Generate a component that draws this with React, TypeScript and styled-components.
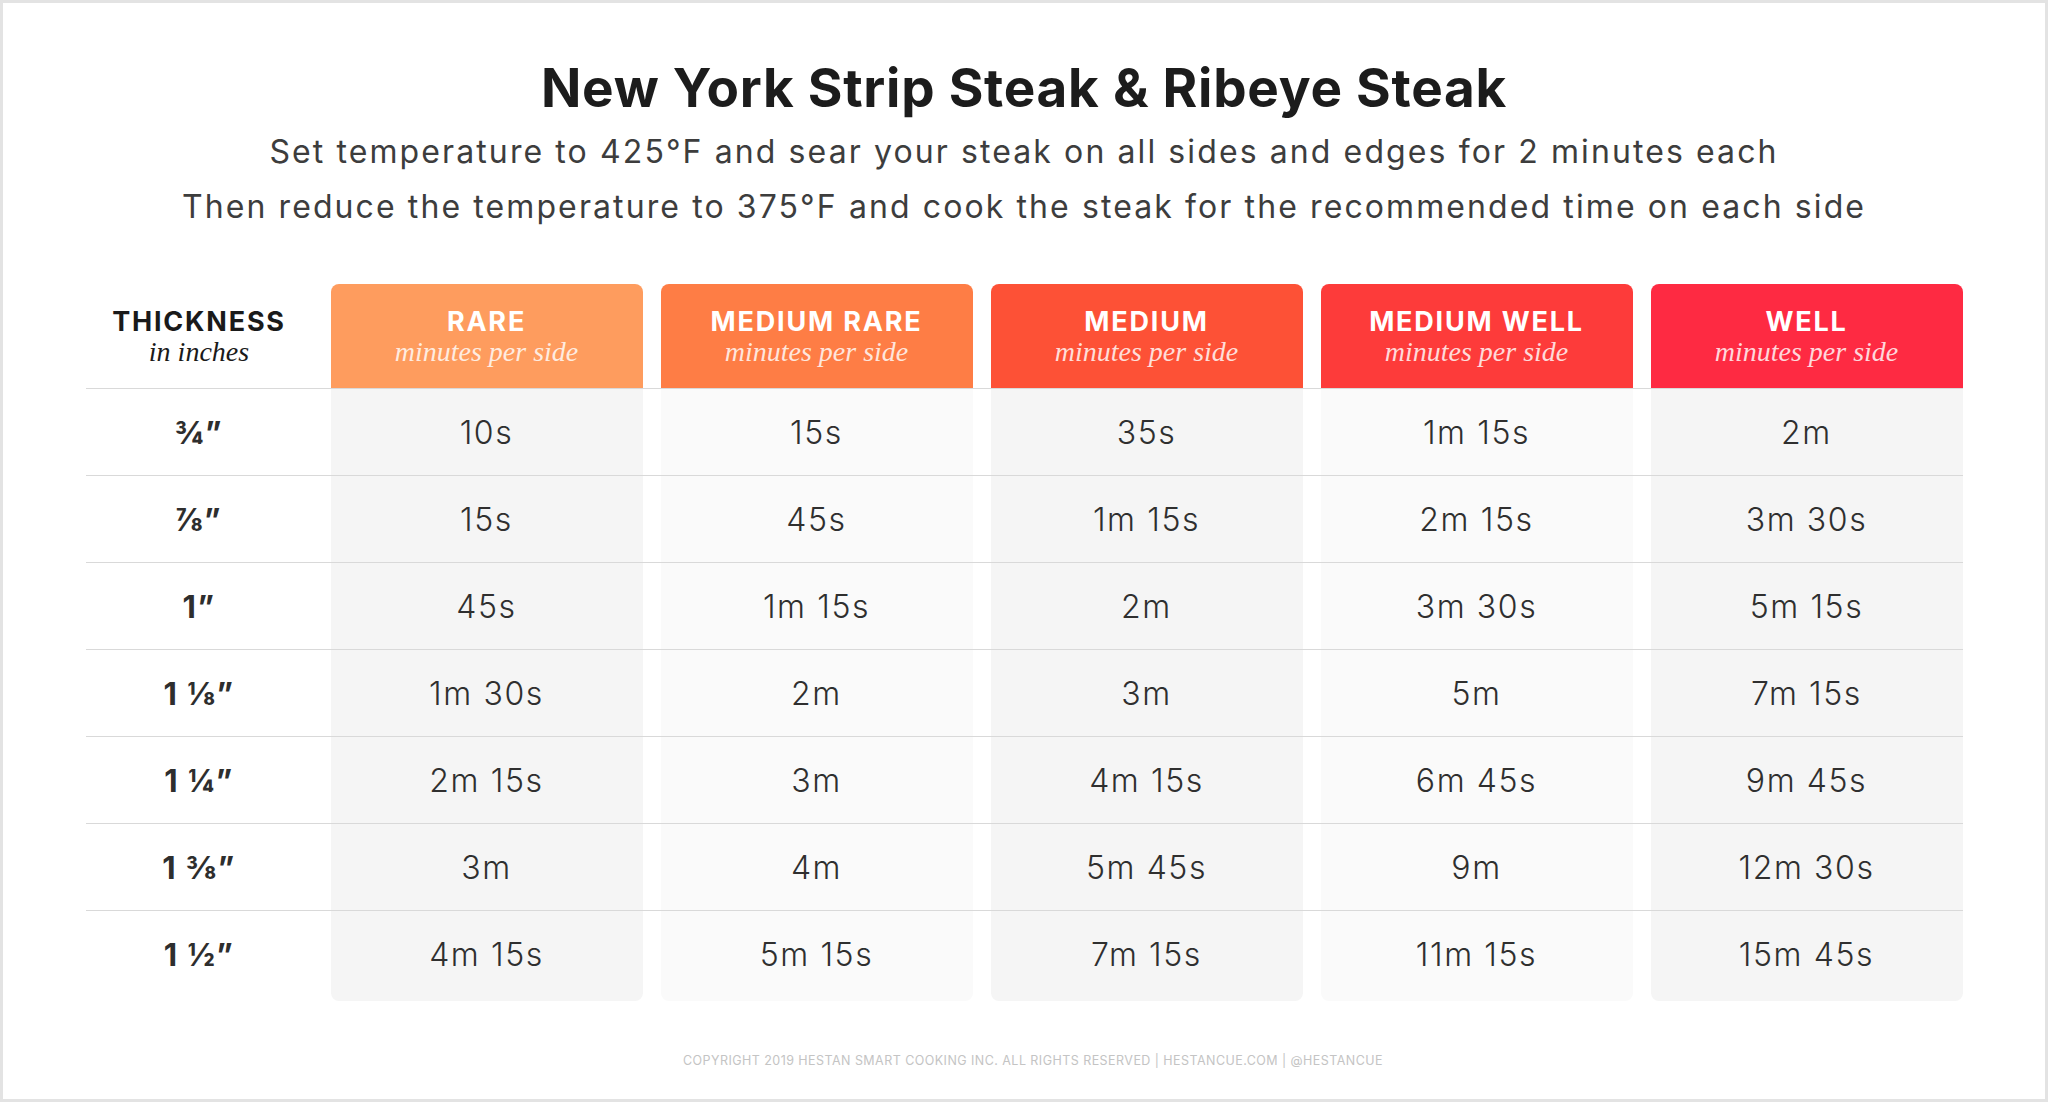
import React from 'react';
import styled, { createGlobalStyle } from 'styled-components';

const GlobalStyle = createGlobalStyle`
  html, body {
    margin: 0;
    padding: 0;
    background: #e3e3e3;
  }
`;

const SANS = `Inter, "Noto Sans", "DejaVu Sans", sans-serif`;
const SERIF = `"Liberation Serif", "DejaVu Serif", serif`;

const Frame = styled.main`
  box-sizing: border-box;
  width: 2048px;
  height: 1102px;
  border: 3px solid #e3e3e3;
  background: #fff;
  display: flex;
  flex-direction: column;
  align-items: center;
  padding-top: 53px;
  font-family: ${SANS};
`;

const Title = styled.h1`
  margin: 0;
  font-size: 53px;
  line-height: 64px;
  font-weight: 700;
  letter-spacing: 0.75px;
  color: #1c1c1c;
`;

const Subtitle = styled.p`
  margin: 0;
  font-size: 32px;
  line-height: 55px;
  font-weight: 400;
  letter-spacing: 2.1px;
  color: #3d3d3d;
  white-space: nowrap;

  &:first-of-type {
    margin-top: 4px;
  }
`;

const Table = styled.section`
  margin-top: 50px;
  display: flex;
  flex-direction: column;
`;

const Row = styled.div<{ $head?: boolean; $last?: boolean }>`
  box-sizing: border-box;
  display: grid;
  grid-template-columns: 227px repeat(5, 312px);
  column-gap: 18px;
  height: ${(p) => (p.$head ? 104 : p.$last ? 91 : 87)}px;
  border-top: ${(p) => (p.$head ? 'none' : '1px solid #d9d9d9')};
`;

const LabelCell = styled.div`
  display: flex;
  flex-direction: column;
  align-items: center;
  justify-content: center;
  padding-top: 2px;
`;

const HeaderCell = styled(LabelCell)<{ $color: string }>`
  background: ${(p) => p.$color};
  border-radius: 8px 8px 0 0;
  color: #fff;
`;

const HeadName = styled.div<{ $dark?: boolean }>`
  font-size: 27px;
  line-height: 32px;
  font-weight: 700;
  letter-spacing: 1.8px;
  color: ${(p) => (p.$dark ? '#1a1a1a' : '#fff')};
`;

const HeadNote = styled.div<{ $dark?: boolean }>`
  margin-top: -2px;
  font-family: ${SERIF};
  font-style: italic;
  font-size: 28px;
  line-height: 32px;
  color: ${(p) => (p.$dark ? '#1a1a1a' : 'rgba(255, 255, 255, 0.82)')};
`;

const SizeCell = styled.div<{ $last?: boolean }>`
  display: flex;
  align-items: center;
  justify-content: center;
  padding-bottom: ${(p) => (p.$last ? 4 : 0)}px;
  font-size: 31px;
  font-weight: 700;
  letter-spacing: 1.5px;
  color: #2e2e2e;
`;

const DataCell = styled.div<{ $fill: string; $last?: boolean }>`
  display: flex;
  align-items: center;
  justify-content: center;
  background: ${(p) => p.$fill};
  border-radius: ${(p) => (p.$last ? '0 0 8px 8px' : '0')};
  padding-bottom: ${(p) => (p.$last ? 4 : 0)}px;
  font-size: 32px;
  font-weight: 300;
  letter-spacing: 1.6px;
  color: #2f2f2f;
`;

const Footer = styled.footer`
  margin-top: 52px;
  margin-left: 18px;
  font-size: 12.5px;
  line-height: 16px;
  color: #c4c4c4;
  letter-spacing: 0.45px;
`;

const levels = [
  { name: 'RARE', color: '#fe9c5e', fill: '#f5f5f5' },
  { name: 'MEDIUM RARE', color: '#fe7d45', fill: '#fafafa' },
  { name: 'MEDIUM', color: '#fd5136', fill: '#f5f5f5' },
  { name: 'MEDIUM WELL', color: '#fd3b3a', fill: '#fafafa' },
  { name: 'WELL', color: '#fe2a42', fill: '#f5f5f5' },
];

const rows: [string, string[]][] = [
  ['¾”', ['10s', '15s', '35s', '1m 15s', '2m']],
  ['⅞”', ['15s', '45s', '1m 15s', '2m 15s', '3m 30s']],
  ['1”', ['45s', '1m 15s', '2m', '3m 30s', '5m 15s']],
  ['1 ⅛”', ['1m 30s', '2m', '3m', '5m', '7m 15s']],
  ['1 ¼”', ['2m 15s', '3m', '4m 15s', '6m 45s', '9m 45s']],
  ['1 ⅜”', ['3m', '4m', '5m 45s', '9m', '12m 30s']],
  ['1 ½”', ['4m 15s', '5m 15s', '7m 15s', '11m 15s', '15m 45s']],
];

const App: React.FC = () => {
  return (
    <>
      <GlobalStyle />
      <Frame>
        <Title>New York Strip Steak &amp; Ribeye Steak</Title>
        <Subtitle>Set temperature to 425°F and sear your steak on all sides and edges for 2 minutes each</Subtitle>
        <Subtitle>Then reduce the temperature to 375°F and cook the steak for the recommended time on each side</Subtitle>

        <Table>
          <Row $head>
            <LabelCell>
              <HeadName $dark>THICKNESS</HeadName>
              <HeadNote $dark>in inches</HeadNote>
            </LabelCell>
            {levels.map((l) => (
              <HeaderCell key={l.name} $color={l.color}>
                <HeadName>{l.name}</HeadName>
                <HeadNote>minutes per side</HeadNote>
              </HeaderCell>
            ))}
          </Row>
          {rows.map(([size, times], i) => {
            const last = i === rows.length - 1;
            return (
              <Row key={size} $last={last}>
                <SizeCell $last={last}>{size}</SizeCell>
                {times.map((t, j) => (
                  <DataCell key={j} $fill={levels[j].fill} $last={last}>
                    {t}
                  </DataCell>
                ))}
              </Row>
            );
          })}
        </Table>

        <Footer>COPYRIGHT 2019 HESTAN SMART COOKING INC. ALL RIGHTS RESERVED | HESTANCUE.COM | @HESTANCUE</Footer>
      </Frame>
    </>
  );
};

export default App;
